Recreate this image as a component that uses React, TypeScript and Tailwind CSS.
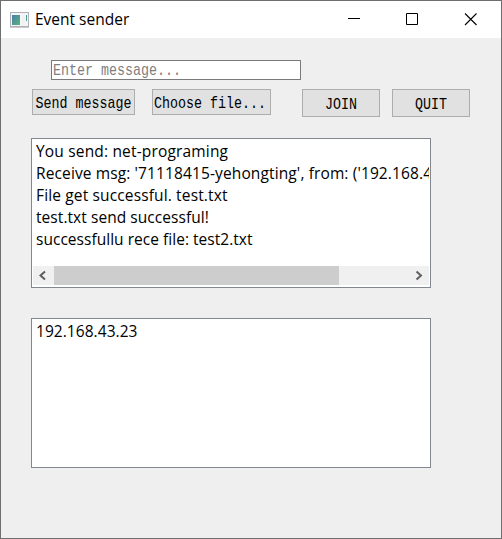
import React from 'react';

const messages = [
  { text: 'You send: net-programing', spacing: 'tracking-[0.17px]' },
  { text: "Receive msg: '71118415-yehongting', from: ('192.168.43.23', 8080)", spacing: 'tracking-[0.12px]' },
  { text: 'File get successful. test.txt', spacing: 'tracking-[0.14px]' },
  { text: 'test.txt send successful!', spacing: 'tracking-[0.06px]' },
  { text: 'successfullu rece file: test2.txt', spacing: 'tracking-[0.03px]' },
];

function AppIcon() {
  return (
    <svg width="19" height="16" viewBox="0 0 19 16" className="shrink-0" shapeRendering="crispEdges">
      <defs>
        <linearGradient id="pane" x1="0" y1="0" x2="1" y2="1">
          <stop offset="0" stopColor="#4b7eac" />
          <stop offset="1" stopColor="#58b477" />
        </linearGradient>
      </defs>
      <rect x="0.5" y="0.5" width="18" height="14" fill="#f4f5f6" stroke="#adb1b6" />
      <rect x="0" y="15" width="19" height="1" fill="#c9cbcd" />
      <rect x="2" y="3" width="8" height="10" fill="url(#pane)" />
      <rect x="12" y="3" width="3" height="10" fill="#f0f2f4" />
      <rect x="16" y="3" width="1" height="6" fill="url(#pane)" />
    </svg>
  );
}

function PushButton({ label, className }: { label: string; className: string }) {
  return (
    <button className={`box-border shrink-0 whitespace-pre border border-[#adadad] bg-[#e1e1e1] leading-none text-black ${className}`}>
      <span className="inline-block scale-y-[1.18]">{label}</span>
    </button>
  );
}

export default function App() {
  return (
    <div className="flex h-[539px] w-[502px] flex-col overflow-hidden border border-[#6f6f6f] bg-[#efefef] font-['Open_Sans','Noto_Sans',sans-serif] text-[15.5px] text-black">
      <header className="flex h-[37px] shrink-0 items-center bg-white pl-[9px]">
        <AppIcon />
        <span className="ml-[6px] grow whitespace-pre leading-none">Event sender</span>
        <svg width="156" height="37" viewBox="345 1 156 37" fill="none" stroke="#000" className="shrink-0">
          <path d="M348 18.5h12M406.5 13.5h11v11h-11z" />
          <path d="M465 13.5l11.5 11.5M476.5 13.5l-11.5 11.5" strokeWidth="1.1" />
        </svg>
      </header>
      <main className="flex flex-col items-start pl-[30px]">
        <div className="ml-5 mt-[22px] h-5 w-[250px] border border-[#7a7a7a] bg-white pl-px pt-[3px] font-['Liberation_Mono',monospace] text-[13.33px] leading-none text-[#808080]">
          <span className="inline-block scale-y-[1.18] whitespace-pre">Enter message...</span>
        </div>
        <div className="ml-px mt-[9px] flex items-start font-['Liberation_Mono',monospace] text-[13.33px]">
          <PushButton label="Send message" className="h-[26px] w-[103px] pt-[3px]" />
          <PushButton label="Choose file..." className="ml-[17px] h-[26px] w-[119px] pl-px pt-[3px] text-left" />
          <PushButton label="JOIN" className="ml-[31px] h-[28px] w-[78px] pt-[3px]" />
          <PushButton label="QUIT" className="ml-3 h-[28px] w-[78px] pt-[3px]" />
        </div>
        <section className="mt-[21px] flex h-[150px] w-[400px] flex-col border border-[#828790] bg-white px-px pb-[2px]">
          <ul className="grow overflow-hidden pl-[3px] pt-px">
            {messages.map((m) => (
              <li key={m.text} className={`h-[22px] whitespace-pre leading-[22px] ${m.spacing}`}>{m.text}</li>
            ))}
          </ul>
          <div className="flex h-[19px] shrink-0 items-center bg-[#f0f0f0]">
            <svg width="21" height="19" viewBox="0 0 21 19" fill="none" stroke="#606060" strokeWidth="2">
              <path d="M12 5.5l-4.5 4l4.5 4" />
            </svg>
            <div className="h-[19px] w-[285px] bg-[#cdcdcd]" />
            <svg width="19" height="19" viewBox="0 0 19 19" fill="none" stroke="#606060" strokeWidth="2" className="ml-auto">
              <path d="M6.5 5.5l4.5 4l-4.5 4" />
            </svg>
          </div>
        </section>
        <section className="mt-[30px] h-[150px] w-[400px] border border-[#828790] bg-white pl-1 pt-px">
          <p className="whitespace-pre leading-[22px] tracking-[0.05px]">192.168.43.23</p>
        </section>
      </main>
    </div>
  );
}
